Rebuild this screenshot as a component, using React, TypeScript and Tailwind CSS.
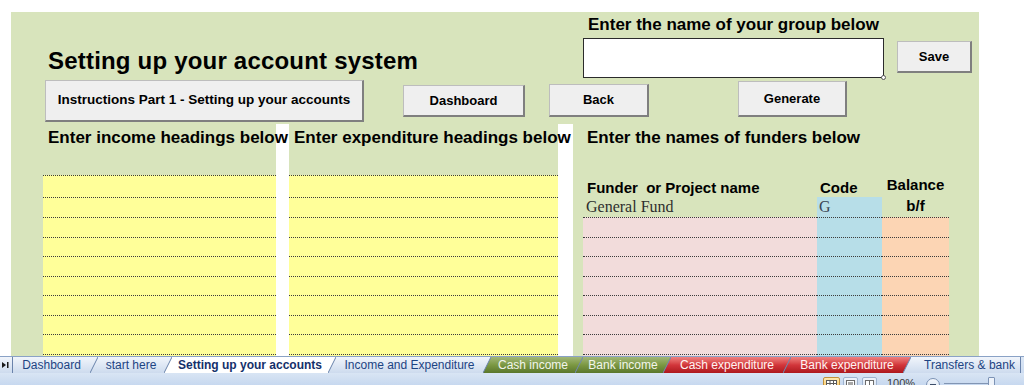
import type { ReactNode } from "react";

type Tone = "normal" | "active" | "green" | "red";

const COLS =
  "grid grid-cols-[32px_233px_13px_269px_15px_10px_234px_65px_67px_30px]";
const DOT = "border-t border-dotted border-[#3c3c3c]";
const YELLOW = `bg-[#ffff99] ${DOT}`;

const SEP_FILL: Record<Tone, string> = {
  normal: "url(#tabNormal)",
  active: "#ffffff",
  green: "url(#tabGreen)",
  red: "url(#tabRed)",
};

const TAB_STYLE: Record<Tone, string> = {
  normal: "bg-linear-to-b from-[#f1f5fb] to-[#cddbee] text-[#1d4483]",
  active: "bg-white text-[#14306a] font-bold",
  green: "bg-linear-to-b from-[#a2b777] via-[#7b9842] to-[#5b772c] text-[#f2f5ec]",
  red: "bg-linear-to-b from-[#ef8080] via-[#d2363b] to-[#ad171d] text-[#fff3f3]",
};

const TABS: { label: string; tone: Tone; width: string; pad?: string }[] = [
  { label: "Dashboard", tone: "normal", width: "w-[77px]" },
  { label: "start here", tone: "normal", width: "w-[66px]" },
  { label: "Setting up your accounts", tone: "active", width: "w-[156px]" },
  { label: "Income and Expenditure", tone: "normal", width: "w-[147px]" },
  { label: "Cash income", tone: "green", width: "w-[84px]" },
  { label: "Bank income", tone: "green", width: "w-[80px]" },
  { label: "Cash expenditure", tone: "red", width: "w-[112px]" },
  { label: "Bank expenditure", tone: "red", width: "w-[112px]" },
  { label: "Transfers & bank", tone: "normal", width: "w-[109px]", pad: "justify-start pl-[13px]" },
];

function SheetButton({ children, className }: { children: ReactNode; className: string }) {
  return (
    <div
      className={`flex shrink-0 items-center justify-center whitespace-nowrap border border-[#bdbdbd] border-r-2 border-b-2 border-r-[#7f7f7f] border-b-[#7f7f7f] bg-[#efefef] font-bold text-black ${className}`}
    >
      {children}
    </div>
  );
}

function Sep({ left, right }: { left: Tone; right: Tone }) {
  return (
    <svg width="8" height="16" viewBox="0 0 8 16" className="block shrink-0">
      <polygon points="0,0 8,0 0,16" fill={SEP_FILL[left]} />
      <polygon points="8,0 8,16 0,16" fill={SEP_FILL[right]} />
      <line x1="0" y1="16" x2="8" y2="0" stroke="#6a83ab" strokeWidth="1" />
    </svg>
  );
}

function FunderRow() {
  return (
    <div className={`${COLS} h-[19.5px]`}>
      <div />
      <div className={YELLOW} />
      <div className="bg-white" />
      <div className={YELLOW} />
      <div className="bg-white" />
      <div />
      <div className={`bg-[#f2dcdb] ${DOT}`} />
      <div className={`bg-[#b7dee8] ${DOT}`} />
      <div className={`bg-[#fcd5b4] ${DOT}`} />
      <div />
    </div>
  );
}

export default function App() {
  return (
    <div className="flex h-[385px] w-[1024px] flex-col overflow-hidden bg-white font-['Liberation_Sans',Arial,sans-serif] text-black">
      <svg className="block h-0 w-0">
        <defs>
          <linearGradient id="tabNormal" x1="0" y1="0" x2="0" y2="1">
            <stop offset="0" stopColor="#f1f5fb" />
            <stop offset="1" stopColor="#cddbee" />
          </linearGradient>
          <linearGradient id="tabGreen" x1="0" y1="0" x2="0" y2="1">
            <stop offset="0" stopColor="#a2b777" />
            <stop offset="0.5" stopColor="#7b9842" />
            <stop offset="1" stopColor="#5b772c" />
          </linearGradient>
          <linearGradient id="tabRed" x1="0" y1="0" x2="0" y2="1">
            <stop offset="0" stopColor="#ef8080" />
            <stop offset="0.5" stopColor="#d2363b" />
            <stop offset="1" stopColor="#ad171d" />
          </linearGradient>
        </defs>
      </svg>

      {/* worksheet */}
      <div className="min-h-0 flex-1 overflow-hidden pt-[12px] pl-[11px]">
        <div className="h-full w-[968px] overflow-hidden bg-[#d8e4bc]">
          <div className="flex h-[68px]">
            <div className="w-[572px] shrink-0 pt-[35px] pl-[37px]">
              <h1 className="whitespace-nowrap text-[24px] leading-[28px] font-bold tracking-[0.2px]">
                Setting up your account system
              </h1>
            </div>
            <div className="flex flex-col">
              <div className="whitespace-nowrap pt-[3px] pl-[5px] text-[17px] leading-[20px] font-bold">
                Enter the name of your group below
              </div>
              <div className="mt-[3px] flex items-start">
                <div className="relative h-[40px] w-[301px] border border-[#2b2b2b] bg-white">
                  <span className="absolute -right-[3px] -bottom-[3px] h-[5px] w-[5px] rounded-full border border-[#555] bg-white" />
                </div>
                <SheetButton className="mt-[3px] ml-[13px] h-[32px] w-[75px] text-[13px]">Save</SheetButton>
              </div>
            </div>
          </div>

          <div className="flex h-[44px] items-start">
            <SheetButton className="ml-[34px] h-[42px] w-[319px] text-[13.5px]">
              Instructions Part 1 - Setting up your accounts
            </SheetButton>
            <SheetButton className="mt-[5px] ml-[39px] h-[32px] w-[122px] text-[13px]">Dashboard</SheetButton>
            <SheetButton className="mt-[4px] ml-[24px] h-[33px] w-[100px] text-[13px]">Back</SheetButton>
            <SheetButton className="mt-[1px] ml-[89px] h-[36px] w-[109px] text-[13px]">Generate</SheetButton>
          </div>

          {/* headings */}
          <div className={`${COLS} h-[51px]`}>
            <div />
            <div className="relative z-10 whitespace-nowrap pt-[4px] pl-[5px] text-[17px] leading-[20px] font-bold">
              Enter income headings below
            </div>
            <div className="bg-white" />
            <div className="relative z-10 whitespace-nowrap pt-[4px] pl-[5px] text-[17px] leading-[20px] font-bold">
              Enter expenditure headings below
            </div>
            <div className="bg-white" />
            <div />
            <div className="col-span-4 whitespace-nowrap pt-[4px] pl-[4px] text-[17px] leading-[20px] font-bold">
              Enter the names of funders below
            </div>
          </div>

          <div className={`${COLS} h-[22px]`}>
            <div />
            <div className={YELLOW} />
            <div className="bg-white" />
            <div className={YELLOW} />
            <div className="bg-white" />
            <div />
            <div className="whitespace-nowrap pt-[4px] pl-[4px] text-[15px] leading-[18px] font-bold">
              Funder&nbsp; or Project name
            </div>
            <div className="pt-[4px] pl-[3px] text-[15px] leading-[18px] font-bold">Code</div>
            <div className="whitespace-nowrap pt-[1px] text-center text-[15px] leading-[18px] font-bold">Balance</div>
            <div />
          </div>

          <div className={`${COLS} h-[20px]`}>
            <div />
            <div className={YELLOW} />
            <div className="bg-white" />
            <div className={YELLOW} />
            <div className="bg-white" />
            <div />
            <div className="whitespace-nowrap pl-[3px] font-['Liberation_Serif',serif] text-[16px] leading-[20px] text-[#2e2e2e]">
              General Fund
            </div>
            <div className="bg-[#b7dee8] pl-[2px] font-['Liberation_Serif',serif] text-[16px] leading-[20px] text-[#3a4552]">
              G
            </div>
            <div className="text-center text-[15px] leading-[18px] font-bold">b/f</div>
            <div />
          </div>

          {[0, 1, 2, 3, 4, 5, 6, 7].map((i) => (
            <FunderRow key={i} />
          ))}
        </div>
      </div>

      {/* sheet tabs + status bar */}
      <div className="flex h-[29px] shrink-0 flex-col bg-linear-to-b from-[#dce7f5] to-[#c3d5ee]">
        <div className="flex h-[17px] border-t border-[#8aa2c6]">
          <div className="flex h-[16px] w-[13px] shrink-0 items-center border-r border-[#6a83ab] bg-linear-to-b from-[#f1f5fb] to-[#cddbee] pl-[2px]">
            <svg width="8" height="8" viewBox="0 0 8 8">
              <polygon points="0,1 4,4 0,7" fill="#1a1a1a" />
              <rect x="5" y="1" width="1.5" height="6" fill="#1a1a1a" />
            </svg>
          </div>
          {TABS.map((tab, i) => (
            <div key={tab.label} className="flex">
              {i > 0 && <Sep left={TABS[i - 1].tone} right={tab.tone} />}
              <div
                className={`flex h-[16px] shrink-0 items-center whitespace-nowrap text-[12px] leading-[16px] ${tab.pad ?? "justify-center"} ${tab.width} ${TAB_STYLE[tab.tone]}`}
              >
                {tab.label}
              </div>
            </div>
          ))}
          <div className="h-[16px] w-[1px] bg-[#6a83ab]" />
        </div>

        <div className="flex flex-1 items-start overflow-hidden bg-linear-to-b from-[#d9e5f4] to-[#c7d8ef]">
          <div className="mt-[4px] ml-[823px] flex items-start">
            <div className="flex h-[14px] w-[17px] items-center justify-center rounded-[2px] border border-[#c2913a] bg-linear-to-b from-[#fde9ae] to-[#f7c25b]">
              <svg width="11" height="9" viewBox="0 0 11 9">
                <rect x="0.5" y="0.5" width="10" height="8" fill="#fff" stroke="#5a5a5a" />
                <path d="M0.5 3.5H10.5M0.5 6H10.5M4 0.5V8.5M7.5 0.5V8.5" stroke="#5a5a5a" />
              </svg>
            </div>
            <div className="ml-[3px] flex h-[14px] w-[15px] items-center justify-center rounded-[2px] border border-[#9fb3cf] bg-linear-to-b from-[#eef3fa] to-[#d3e0f1]">
              <svg width="9" height="9" viewBox="0 0 9 9">
                <rect x="0.5" y="0.5" width="8" height="8" fill="#fff" stroke="#6b6b6b" />
                <rect x="2" y="2" width="5" height="5" fill="#a7a7a7" />
              </svg>
            </div>
            <div className="ml-[4px] flex h-[14px] w-[15px] items-center justify-center rounded-[2px] border border-[#9fb3cf] bg-linear-to-b from-[#eef3fa] to-[#d3e0f1]">
              <svg width="9" height="9" viewBox="0 0 9 9">
                <rect x="0.5" y="0.5" width="8" height="8" fill="#fff" stroke="#6b6b6b" />
                <path d="M4.5 0.5V8.5" stroke="#6b6b6b" />
              </svg>
            </div>
            <span className="ml-[10px] text-[11px] leading-[13px] text-[#3a3a3a]">100%</span>
            <div className="mt-[1px] ml-[11px] flex h-[14px] w-[14px] items-center justify-center rounded-full border border-[#7d93b5] bg-linear-to-b from-[#f6f9fd] to-[#d3e0f1]">
              <div className="h-[1.5px] w-[6px] bg-[#3d4e6a]" />
            </div>
            <div className="mt-[6px] ml-[4px] h-[1px] w-[48px] bg-[#8195b3]" />
            <div className="ml-[-4px] h-[12px] w-[7px] rounded-[1px] border border-[#7d93b5] bg-[#eef3fa]" />
          </div>
        </div>
      </div>
    </div>
  );
}
